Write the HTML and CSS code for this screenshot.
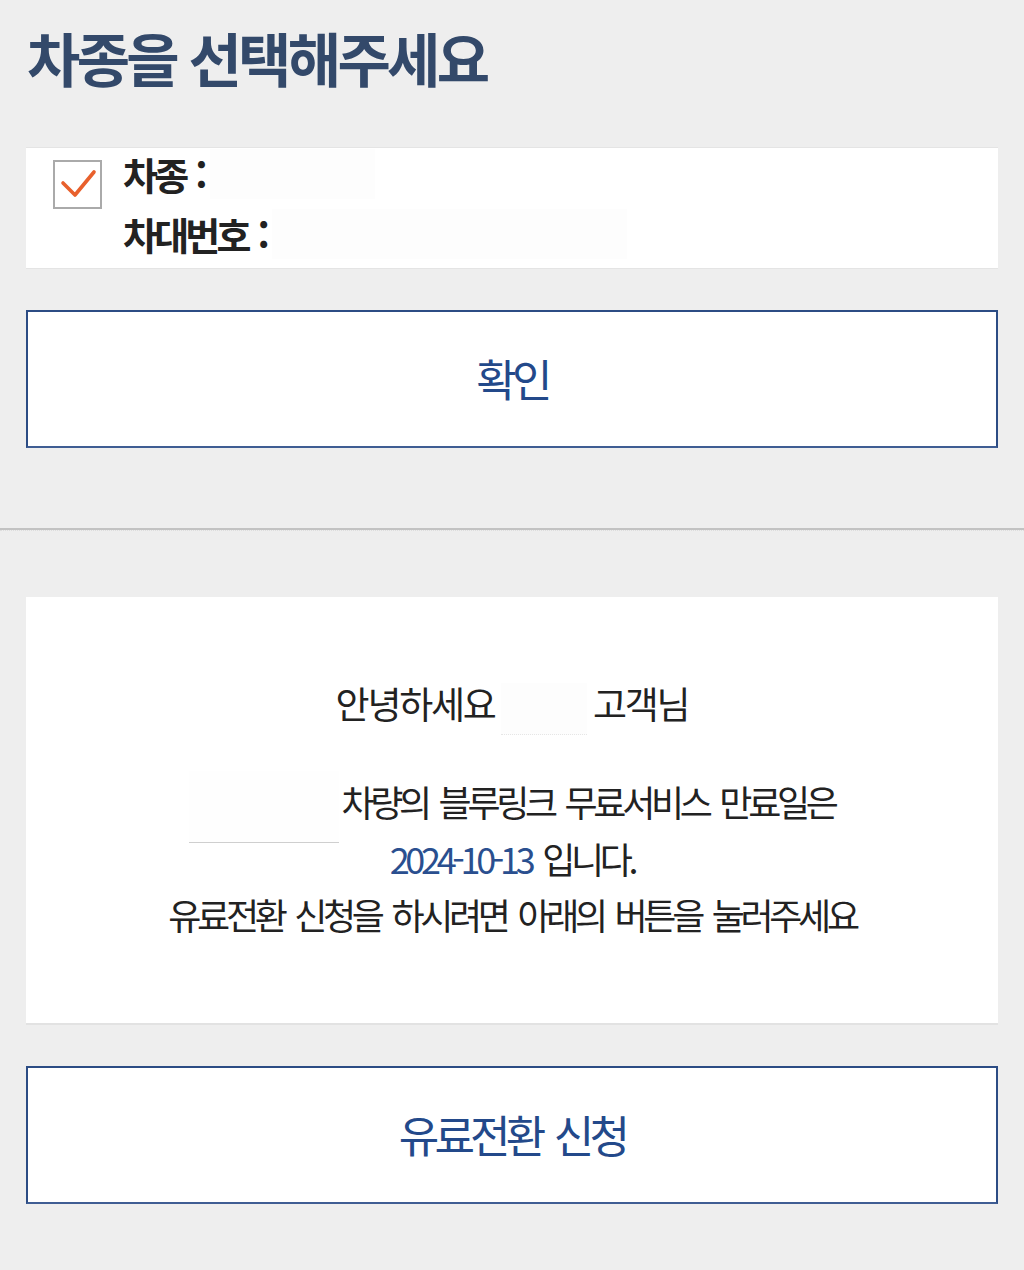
FILE: index.html
```html
<!DOCTYPE html>
<html lang="ko">
<head>
<meta charset="utf-8">
<title>차종 선택</title>
<link rel="stylesheet" href="styles.css">
</head>
<body>
<main class="page">
  <section class="top">
    <h1 class="title">차종을 선택해주세요</h1>
    <div class="car-card">
      <span class="checkbox">
        <svg viewBox="0 0 49 49" width="49" height="49" aria-hidden="true">
          <polyline points="10,23 22,35 41,12" fill="none" stroke="#e8602c" stroke-width="3.6" stroke-linecap="round" stroke-linejoin="round"/>
        </svg>
      </span>
      <div class="car-info">
        <div class="info-row">차종 :<span class="mask mask-a"></span></div>
        <div class="info-row">차대번호 :<span class="mask mask-b"></span></div>
      </div>
    </div>
    <button class="btn" type="button">확인</button>
  </section>
  <hr class="divider">
  <section class="bottom">
    <div class="notice-card">
      <p class="greet">안녕하세요 <span class="mask-name"></span> 고객님</p>
      <p class="msg"><span class="mask-car"></span>차량의 블루링크 무료서비스 만료일은<br><span class="date">2024-10-13</span> 입니다.<br>유료전환 신청을 하시려면 아래의 버튼을 눌러주세요</p>
    </div>
    <button class="btn btn-paid" type="button">유료전환 신청</button>
  </section>
</main>
</body>
</html>
```
FILE: styles.css
```css
* { box-sizing: border-box; }
html, body { margin: 0; padding: 0; }
body {
  background: #eeeeee;
  font-family: "Noto Sans CJK KR", "Noto Sans", sans-serif;
  color: #222222;
}
.page { width: 1024px; }
.top { padding: 17px 26px 0; }
.title {
  margin: 0 0 0 1px;
  font-size: 58px;
  line-height: 80px;
  font-weight: 700;
  letter-spacing: -0.064em;
  color: #33496a;
}
.car-card {
  margin-top: 50px;
  height: 122px;
  background: #ffffff;
  border-top: 1px solid #e4e4e4;
  border-bottom: 1px solid #e4e4e4;
  display: flex;
  align-items: flex-start;
  padding: 12px 0 0 27px;
  gap: 21px;
}
.checkbox {
  width: 49px;
  height: 49px;
  border: 2px solid #aaaaaa;
  display: flex;
  align-items: center;
  justify-content: center;
  flex: none;
}
.checkbox svg { display: block; margin: -2px; }
.car-info { display: flex; flex-direction: column; }
.info-row {
  font-size: 38px;
  line-height: 58px;
  font-weight: 700;
  letter-spacing: -0.1em;
  word-spacing: 3px;
  color: #222222;
  margin-top: -15px;
  display: flex;
  align-items: center;
  white-space: pre;
}
.info-row + .info-row { margin-top: 2px; }
.mask { display: inline-block; height: 50px; background: #fdfdfd; }
.mask-a { width: 165px; margin-left: 6px; }
.mask-b { width: 355px; margin-left: 6px; }
.btn {
  display: block;
  width: 972px;
  height: 138px;
  margin: 41px 0 0;
  background: #ffffff;
  border: 2px solid #2c4c84;
  border-bottom-color: #3f5d93;
  font-family: "Noto Sans CJK KR", "Noto Sans", sans-serif;
  font-size: 44px;
  font-weight: 400;
  letter-spacing: -0.11em;
  word-spacing: 5px;
  color: #23498a;
  padding: 0 0 2px;
  cursor: pointer;
}
.divider {
  margin: 80px 0 0;
  border: 0;
  border-top: 2px solid #c2c2c2;
  border-bottom: 1px dotted #dddddd;
  height: 0;
}
.bottom { padding: 66px 26px 0; }
.notice-card {
  height: 428px;
  background: #ffffff;
  border-bottom: 2px solid #e2e2e2;
  text-align: center;
  padding-top: 78px;
}
.greet, .msg {
  margin: 0;
  color: #222222;
}
.greet {
  font-size: 37px;
  line-height: 56px;
  letter-spacing: -0.06em;
  word-spacing: -2px;
}
.mask-name {
  display: inline-block;
  width: 86px;
  height: 52px;
  vertical-align: middle;
  background: #fdfdfd;
  border-bottom: 1px dotted #e6e6e6;
}
.msg {
  margin-top: 39px;
  font-size: 36px;
  line-height: 55.5px;
  letter-spacing: -0.12em;
  word-spacing: 5px;
}
.mask-car {
  display: inline-block;
  width: 150px;
  height: 72px;
  margin: -12px 2px -12px 0;
  vertical-align: middle;
  background: #fefefe;
  border-bottom: 1px solid #cfcfcf;
}
.date { color: #2a4f8f; }
.btn-paid { margin-top: 41px; }
```
